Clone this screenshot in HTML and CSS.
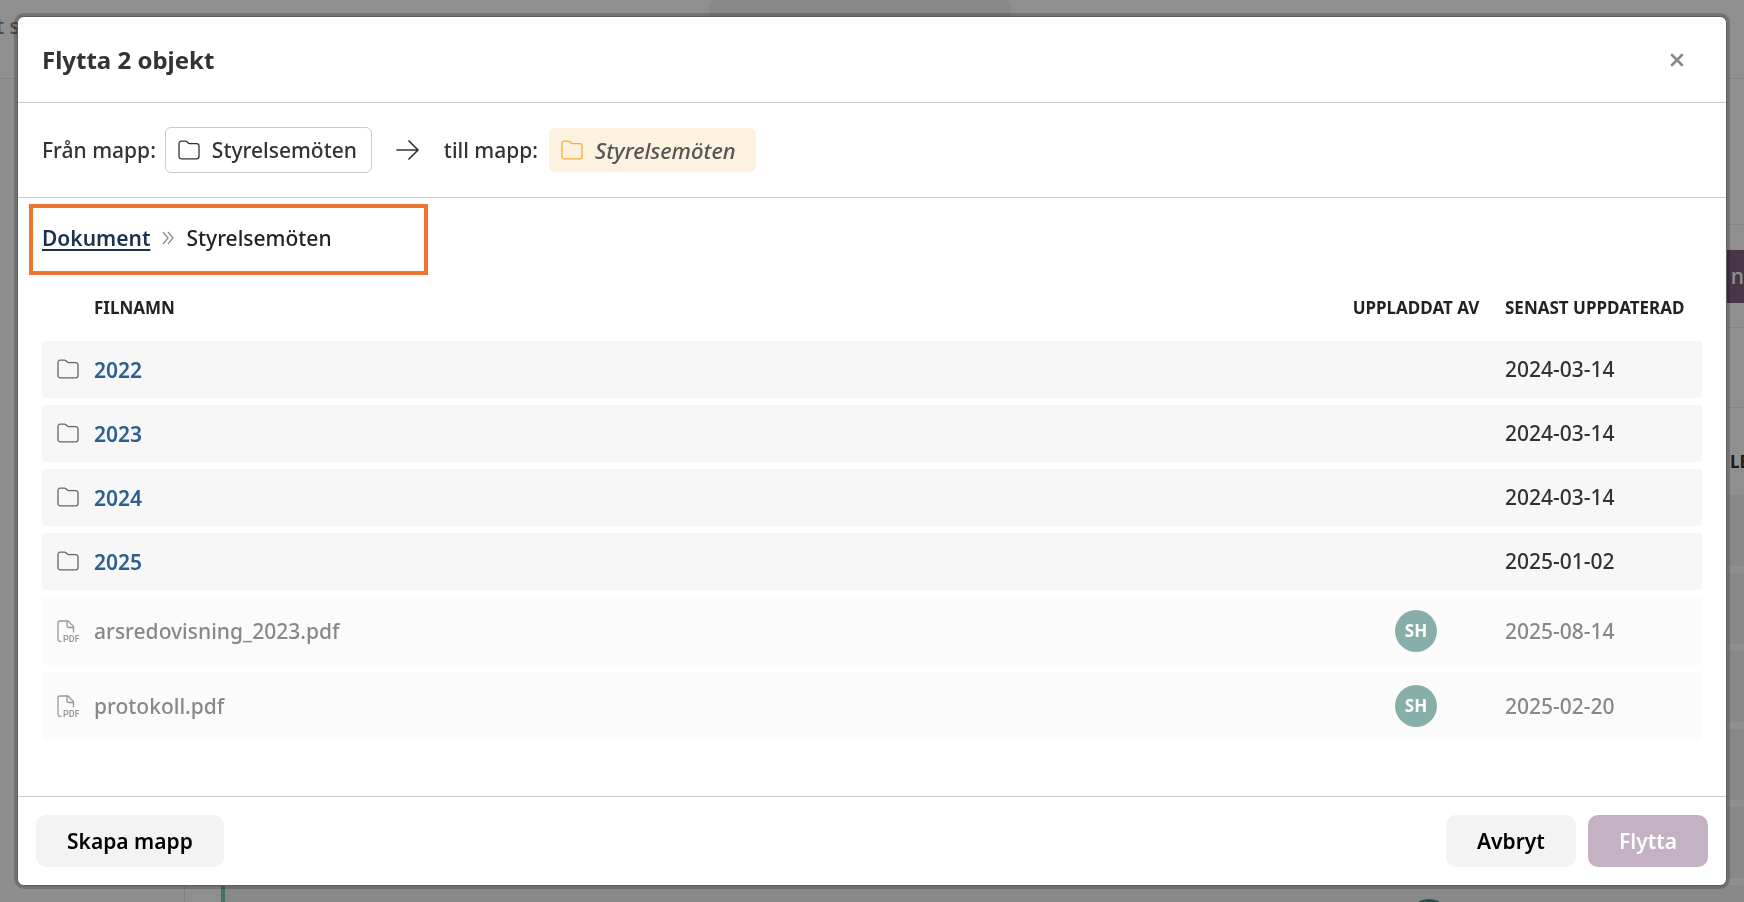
FILE: index.html
```html
<!DOCTYPE html>
<html lang="sv">
<head>
    <meta charset="UTF-8">
    <meta name="viewport" content="width=device-width, initial-scale=1.0">
    <title>Flytta 2 objekt</title>
    <link rel="stylesheet" href="styles.css">
</head>
<body>
    <svg width="0" height="0" class="sprite">
        <symbol id="icon-folder" viewBox="0 0 22 20">
            <path d="M1 16.5v-13A2.3 2.3 0 0 1 3.3 1.2h4.2c.6 0 1.1.2 1.500.6l1.200 1.200c.4.4.9.600 1.500.600h7A2.300 2.300 0 0 1 21 5.900v10.600a2.300 2.300 0 0 1-2.300 2.300H3.300A2.300 2.300 0 0 1 1 16.500z" fill="none" stroke="currentColor" stroke-width="1.300"/>
        </symbol>
        <symbol id="icon-pdf" viewBox="0 0 22 22">
            <path d="M4.500 21.300H3a2 2 0 0 1-2-2V3a2 2 0 0 1 2-2h8l5.500 5.500v6M10 1v4.500a2 2 0 0 0 2 2h4.500" fill="none" stroke="currentColor" stroke-width="1.300"/>
            <text x="6" y="21.500" class="pdf-label">PDF</text>
        </symbol>
    </svg>

    <!-- Page behind the dialog -->
    <div class="page">
        <header class="page-header">
            <span class="page-title">t s</span>
            <span class="page-pill"></span>
        </header>
        <div class="page-body">
            <div class="sidebar"></div>
            <main class="page-main">
                <div class="page-intro"></div>
                <div class="page-toolbar"><button type="button" class="page-btn">nt</button></div>
                <div class="page-filter"></div>
                <div class="page-list-head">LE</div>
                <div class="page-list">
                    <div class="page-row"></div>
                    <div class="page-row"></div>
                    <div class="page-row"></div>
                    <div class="page-row"></div>
                    <div class="page-row"></div>
                    <div class="page-row selected"><span class="page-avatar"></span></div>
                </div>
            </main>
        </div>
    </div>

    <div class="overlay">
        <div class="modal" role="dialog" aria-labelledby="modal-title">
            <div class="modal-header">
                <h1 id="modal-title">Flytta 2 objekt</h1>
                <button type="button" class="close-btn" aria-label="Stäng">
                    <svg width="14" height="14" viewBox="0 0 14 14"><path d="M2 2l10 10M12 2L2 12" stroke="currentColor" stroke-width="2.600" stroke-linecap="round"/></svg>
                </button>
            </div>

            <div class="move-path">
                <span>Från mapp:</span>
                <span class="folder-chip">
                    <svg class="icon-folder"><use href="#icon-folder"/></svg>
                    Styrelsemöten
                </span>
                <svg class="arrow" width="24" height="20" viewBox="0 0 24 20"><path d="M1 10h21M13 1l9 9-9 9" fill="none" stroke="currentColor" stroke-width="1.700" stroke-linecap="round" stroke-linejoin="round"/></svg>
                <span>till mapp:</span>
                <span class="folder-chip target">
                    <svg class="icon-folder"><use href="#icon-folder"/></svg>
                    <em>Styrelsemöten</em>
                </span>
            </div>

            <div class="modal-body">
                <nav class="breadcrumb">
                    <a href="#">Dokument</a>
                    <svg width="12" height="14" viewBox="0 0 12 14"><path d="M1 1l5 6-5 6M6 1l5 6-5 6" fill="none" stroke="currentColor" stroke-width="1.200"/></svg>
                    <span>Styrelsemöten</span>
                </nav>

                <table class="file-table">
                    <thead>
                        <tr>
                            <th class="col-icon"></th>
                            <th class="col-name">Filnamn</th>
                            <th class="col-user">Uppladdat av</th>
                            <th class="col-date">Senast uppdaterad</th>
                        </tr>
                    </thead>
                    <tbody>
                        <tr class="folder">
                            <td class="col-icon"><svg class="icon-folder"><use href="#icon-folder"/></svg></td>
                            <td class="col-name"><a href="#">2022</a></td>
                            <td class="col-user"></td>
                            <td class="col-date">2024-03-14</td>
                        </tr>
                        <tr class="folder">
                            <td class="col-icon"><svg class="icon-folder"><use href="#icon-folder"/></svg></td>
                            <td class="col-name"><a href="#">2023</a></td>
                            <td class="col-user"></td>
                            <td class="col-date">2024-03-14</td>
                        </tr>
                        <tr class="folder">
                            <td class="col-icon"><svg class="icon-folder"><use href="#icon-folder"/></svg></td>
                            <td class="col-name"><a href="#">2024</a></td>
                            <td class="col-user"></td>
                            <td class="col-date">2024-03-14</td>
                        </tr>
                        <tr class="folder">
                            <td class="col-icon"><svg class="icon-folder"><use href="#icon-folder"/></svg></td>
                            <td class="col-name"><a href="#">2025</a></td>
                            <td class="col-user"></td>
                            <td class="col-date">2025-01-02</td>
                        </tr>
                        <tr class="file">
                            <td class="col-icon"><svg class="icon-pdf"><use href="#icon-pdf"/></svg></td>
                            <td class="col-name">arsredovisning_2023.pdf</td>
                            <td class="col-user"><span class="avatar">SH</span></td>
                            <td class="col-date">2025-08-14</td>
                        </tr>
                        <tr class="file">
                            <td class="col-icon"><svg class="icon-pdf"><use href="#icon-pdf"/></svg></td>
                            <td class="col-name">protokoll.pdf</td>
                            <td class="col-user"><span class="avatar">SH</span></td>
                            <td class="col-date">2025-02-20</td>
                        </tr>
                    </tbody>
                </table>
            </div>

            <div class="modal-footer">
                <button type="button" class="btn">Skapa mapp</button>
                <div class="footer-actions">
                    <button type="button" class="btn">Avbryt</button>
                    <button type="button" class="btn btn-primary" disabled>Flytta</button>
                </div>
            </div>
        </div>
    </div>
</body>
</html>
```
FILE: styles.css
```css
* {
    box-sizing: border-box;
}

body {
    margin: 0;
    height: 100vh;
    overflow: hidden;
    font-family: "Noto Sans", sans-serif;
    font-size: 21px;
    font-weight: 500;
    line-height: 28px;
    color: #333;
    background: #fff;
}

button {
    font: inherit;
    border: none;
    cursor: pointer;
}

svg {
    display: block;
    flex-shrink: 0;
}

.sprite {
    position: absolute;
}

/* Page behind the dialog */
.page {
    display: flex;
    flex-direction: column;
    height: 100vh;
    overflow: hidden;
}

.page-header {
    display: flex;
    flex-shrink: 0;
    align-items: flex-start;
    height: 79px;
    border-bottom: 1px solid #ededed;
}

.page-title {
    width: 713px;
    margin: 12px 0 0 -4px;
    color: #888;
}

.page-pill {
    width: 302px;
    height: 52px;
    margin-top: -3px;
    border-radius: 12px;
    background: #f3f3f3;
}

.page-body {
    display: flex;
    flex: 1;
    min-height: 0;
}

.sidebar {
    width: 185px;
    border-right: 1px solid #e2e2e2;
    background: #fdfdfd;
}

.page-main {
    flex: 1;
}

.page-intro {
    height: 146px;
    border-bottom: 1px solid #ededed;
}

.page-toolbar {
    display: flex;
    justify-content: flex-end;
    align-items: center;
    height: 103px;
    border-bottom: 1px solid #ededed;
}

.page-btn {
    height: 53px;
    margin-right: -8px;
    padding: 0 0 0 60px;
    color: #fff;
    background: #815f7b;
}

.page-filter {
    height: 80px;
    border-bottom: 1px solid #ededed;
}

.page-list-head {
    display: flex;
    justify-content: flex-end;
    align-items: center;
    height: 87px;
    margin-right: -5px;
    padding-top: 20px;
    font-size: 17px;
    font-weight: 700;
}

.page-list {
    display: flex;
    flex-direction: column;
    gap: 7px;
    padding-left: 36px;
}

.page-row {
    height: 71px;
    background: #f3f3f3;
}

.page-row.selected {
    display: flex;
    justify-content: flex-end;
    padding: 14px 294px 0 0;
    border-left: 4px solid #74cfaf;
}

.page-avatar {
    width: 42px;
    height: 42px;
    border-radius: 50%;
    background: #478f7d;
}

/* Dialog */
.overlay {
    position: fixed;
    inset: 0;
    display: flex;
    padding: 16px 17px;
    background: rgba(0, 0, 0, 0.44);
}

.modal {
    display: flex;
    flex-direction: column;
    flex: 1;
    border: 1px solid #5e5e5e;
    border-radius: 7px;
    background: #fff;
    box-shadow: 0 0 0 3px rgba(0, 0, 0, 0.2);
}

.modal-header {
    display: flex;
    justify-content: space-between;
    align-items: center;
    height: 86px;
    padding: 0 42px 0 24px;
    border-bottom: 1px solid #ccc;
}

.modal-header h1 {
    margin: 0;
    font-size: 24px;
    font-weight: 700;
}

.close-btn {
    padding: 0;
    color: #888;
    background: none;
}

.move-path {
    display: flex;
    align-items: center;
    height: 95px;
    padding: 0 24px;
    border-bottom: 1px solid #ccc;
}

.folder-chip {
    display: flex;
    align-items: center;
    gap: 12px;
    min-width: 207px;
    height: 46px;
    margin-left: 9px;
    padding: 0 12px;
    border: 1px solid #ccc;
    border-radius: 6px;
}

.folder-chip.target {
    height: 44px;
    margin-left: 11px;
    border: none;
    background: #fdf2df;
    color: #f5ae3d;
}

.folder-chip em {
    color: #555;
    font-size: 22px;
}

.icon-folder {
    width: 22px;
    height: 20px;
}

.icon-pdf {
    width: 22px;
    height: 22px;
    color: #999;
}

.pdf-label {
    font-family: Roboto, sans-serif;
    font-size: 9px;
    font-weight: 600;
    fill: currentColor;
}

.arrow {
    margin: 0 24px;
}

.modal-body {
    flex: 1;
    padding: 6px 24px 0;
}

.breadcrumb {
    display: flex;
    align-items: center;
    gap: 12px;
    width: 399px;
    height: 71px;
    margin-left: -13px;
    padding: 0 9px 4px;
    border: 4px solid #ee7630;
    color: #222;
}

.breadcrumb a {
    color: #1b334d;
    font-weight: 600;
    text-decoration-thickness: 2px;
    text-underline-offset: 3px;
}

.breadcrumb svg {
    color: #888;
}

.file-table {
    width: 100%;
    border-collapse: separate;
    border-spacing: 0 7px;
}

.file-table th,
.file-table td {
    padding: 0;
    text-align: left;
}

.file-table th {
    height: 52px;
    color: #222;
    font-size: 17px;
    font-weight: 700;
    text-transform: uppercase;
}

.file-table td {
    background: #f7f7f7;
}

.file-table td:first-child {
    border-radius: 3px 0 0 3px;
}

.file-table .folder td {
    height: 57px;
    padding-bottom: 2px;
}

.file-table .file td {
    height: 68px;
    color: #888;
    background: #fbfbfb;
}

.file-table .col-icon {
    width: 52px;
    padding-left: 15px;
}

.file-table td.col-icon {
    color: #666;
}

.file-table .col-user {
    width: 154px;
    text-align: center;
}

.file-table .col-date {
    width: 209px;
    padding-left: 12px;
}

.file-table a {
    color: #2d5f91;
    font-weight: 600;
    text-decoration: none;
}

.file-table .folder .col-name {
    padding-top: 3px;
}

.avatar {
    display: flex;
    justify-content: center;
    align-items: center;
    width: 42px;
    height: 42px;
    margin: 0 auto;
    border-radius: 50%;
    color: #fff;
    background: #87aea8;
    font-size: 17px;
    font-weight: 700;
}

.modal-footer {
    display: flex;
    justify-content: space-between;
    align-items: center;
    height: 89px;
    padding: 0 18px;
    border-top: 1px solid #ccc;
}

.footer-actions {
    display: flex;
    gap: 12px;
}

.btn {
    height: 52px;
    padding: 0 31px;
    border-radius: 10px;
    color: #000;
    background: #f3f3f3;
    font-weight: 600;
}

.btn-primary {
    color: #fff;
    background: #c4b1c4;
}
```
